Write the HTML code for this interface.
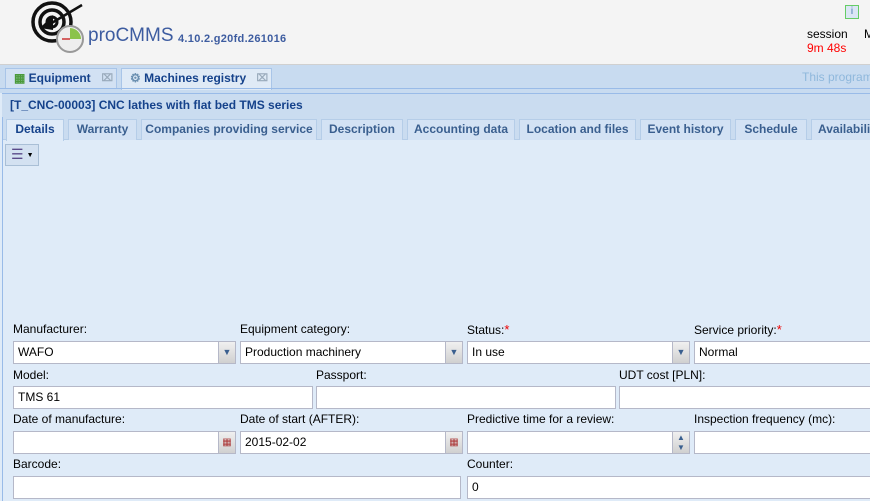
<!DOCTYPE html>
<html><head><style>
*{box-sizing:border-box;margin:0;padding:0}
body{width:870px;height:501px;overflow:hidden;background:#dfebf8;font-family:"Liberation Sans",sans-serif;font-size:12px;color:#000;position:relative}
.a{position:absolute;white-space:nowrap}
.hdr{left:0;top:0;width:870px;height:65px;background:#f4f4f4;border-bottom:1px solid #d0d0d0}
.strip{left:0;top:65px;width:870px;height:28px;background:#c8dbf0}
.otab{top:68px;height:21px;border:1px solid #a9c5e8;border-bottom:none;background:#d2e1f3;font-weight:bold;color:#15428b;font-size:12px;line-height:19px;padding-left:8px}
.ttl{left:2px;top:93px;width:868px;height:24px;background:#cadcf0;border-top:1px solid #99bbe8;font-weight:bold;color:#15428b;line-height:22px;padding-left:8px;font-size:12px}
.itab{top:119px;height:21px;border:1px solid #b5cde8;border-bottom:none;background:#d3e2f4;font-weight:bold;color:#3a5f8f;line-height:19px;text-align:center;font-size:12px}
.lbl{font-size:12px;color:#000}
.inp{height:23px;background:#fff;border:1px solid #b5b8c8;padding-left:4px;line-height:21px;font-size:12px}
.btn{height:23px;width:17px;background:linear-gradient(#f0f0f0,#d0d0d0);border:1px solid #b5b8c8;border-left:none}
.star{color:#e00;font-size:13px}
</style></head><body>
<div class="a hdr"></div>
<svg class="a" style="left:28px;top:0px" width="60" height="56" viewBox="0 0 60 56">
<circle cx="24" cy="22" r="19" fill="none" stroke="#111" stroke-width="3.5"/>
<circle cx="24" cy="22" r="12" fill="none" stroke="#111" stroke-width="3.5"/>
<circle cx="24" cy="22" r="5" fill="none" stroke="#111" stroke-width="3"/>
<line x1="22" y1="24" x2="54" y2="5" stroke="#111" stroke-width="2.5"/>
<polygon points="12,28 25,15 25,30" fill="#111"/>
<circle cx="42" cy="39" r="13" fill="#eee" stroke="#999" stroke-width="2"/>
<path d="M42 39 L42 28 A11 11 0 0 1 53 39 Z" fill="#8bc34a"/>
<line x1="42" y1="39" x2="34" y2="39" stroke="#c33" stroke-width="1.5"/>
</svg>
<div class="a" style="left:88px;top:25px;font-size:19px;color:#3d5ca0">proCMMS</div>
<div class="a" style="left:178px;top:33px;font-size:11px;color:#3d5ca0;font-weight:bold;letter-spacing:.3px">4.10.2.g20fd.261016</div>
<div class="a" style="left:845px;top:5px;width:14px;height:14px;border:1px solid #6c6;background:#dbe6f5;color:#4a7ab0;font-size:10px;text-align:center;line-height:12px">i</div>
<div class="a" style="left:807px;top:27px;font-size:12px">session</div>
<div class="a" style="left:864px;top:27px;font-size:12px">M</div>
<div class="a" style="left:807px;top:41px;font-size:12px;color:#f00">9m 48s</div>
<div class="a strip"></div>
<div class="a otab" style="left:5px;width:112px"><span style="color:#4a9a3a">&#9638;</span> Equipment<span style="position:absolute;right:3px;top:0;color:#9ab;font-size:10px">&#8999;</span></div>
<div class="a otab" style="left:121px;width:151px;background:#dfeaf6;height:22px"><span style="color:#6a8fb0">&#9881;</span> Machines registry<span style="position:absolute;right:3px;top:0;color:#9ab;font-size:10px">&#8999;</span></div>
<div class="a" style="left:802px;top:70px;color:#8fb8dc;font-size:12px">This program</div>
<div class="a" style="left:0;top:88px;width:870px;height:1px;background:#99bbe8"></div>
<div class="a ttl">[T_CNC-00003] CNC lathes with flat bed TMS series</div>
<div class="a" style="left:2px;top:117px;width:1px;height:384px;background:#99bbe8"></div>
<div class="a" style="left:3px;top:117px;width:867px;height:23px;background:#cadcf0;border-bottom:1px solid #b5cde8"></div>
<div class="a itab" style="left:6px;width:58px;background:#dfebf8;height:22px;color:#15428b">Details</div>
<div class="a itab" style="left:68px;width:69px">Warranty</div>
<div class="a itab" style="left:141px;width:176px">Companies providing service</div>
<div class="a itab" style="left:321px;width:82px">Description</div>
<div class="a itab" style="left:407px;width:108px">Accounting data</div>
<div class="a itab" style="left:519px;width:117px">Location and files</div>
<div class="a itab" style="left:640px;width:91px">Event history</div>
<div class="a itab" style="left:735px;width:72px">Schedule</div>
<div class="a itab" style="left:811px;width:70px;text-align:left;padding-left:6px">Availability</div>
<div class="a" style="left:5px;top:144px;width:34px;height:22px;border:1px solid #a9bfd6;background:#d3e1f1;color:#5a4a8a;font-size:14px;line-height:19px;padding-left:5px">&#9776;<span style="font-size:7px;color:#000;margin-left:3px;vertical-align:middle">&#9660;</span></div>

<div class="a lbl" style="left:13px;top:322px">Manufacturer:</div>
<div class="a lbl" style="left:240px;top:322px">Equipment category:</div>
<div class="a lbl" style="left:467px;top:322px">Status:<span class="star">*</span></div>
<div class="a lbl" style="left:694px;top:322px">Service priority:<span class="star">*</span></div>
<div class="a inp" style="left:13px;top:341px;width:206px">WAFO</div><div class="a btn" style="left:219px;top:341px;color:#3a5f8f;font-size:9px;text-align:center;line-height:21px">&#9660;</div>
<div class="a inp" style="left:240px;top:341px;width:206px">Production machinery</div><div class="a btn" style="left:446px;top:341px;color:#3a5f8f;font-size:9px;text-align:center;line-height:21px">&#9660;</div>
<div class="a inp" style="left:467px;top:341px;width:206px">In use</div><div class="a btn" style="left:673px;top:341px;color:#3a5f8f;font-size:9px;text-align:center;line-height:21px">&#9660;</div>
<div class="a inp" style="left:694px;top:341px;width:190px">Normal</div>

<div class="a lbl" style="left:13px;top:368px">Model:</div>
<div class="a lbl" style="left:316px;top:368px">Passport:</div>
<div class="a lbl" style="left:619px;top:368px">UDT cost [PLN]:</div>
<div class="a inp" style="left:13px;top:386px;width:300px">TMS 61</div>
<div class="a inp" style="left:316px;top:386px;width:300px"></div>
<div class="a inp" style="left:619px;top:386px;width:270px"></div>

<div class="a lbl" style="left:13px;top:412px">Date of manufacture:</div>
<div class="a lbl" style="left:240px;top:412px">Date of start (AFTER):</div>
<div class="a lbl" style="left:467px;top:412px">Predictive time for a review:</div>
<div class="a lbl" style="left:694px;top:412px">Inspection frequency (mc):</div>
<div class="a inp" style="left:13px;top:431px;width:206px"></div><div class="a btn" style="left:219px;top:431px;color:#a33;font-size:10px;text-align:center;line-height:21px">&#9638;</div>
<div class="a inp" style="left:240px;top:431px;width:206px">2015-02-02</div><div class="a btn" style="left:446px;top:431px;color:#a33;font-size:10px;text-align:center;line-height:21px">&#9638;</div>
<div class="a inp" style="left:467px;top:431px;width:206px"></div><div class="a btn" style="left:673px;top:431px;color:#3a5f8f;font-size:8px;text-align:center;line-height:10px;padding-top:1px">&#9650;<br>&#9660;</div>
<div class="a inp" style="left:694px;top:431px;width:190px"></div>

<div class="a lbl" style="left:13px;top:457px">Barcode:</div>
<div class="a lbl" style="left:467px;top:457px">Counter:</div>
<div class="a inp" style="left:13px;top:476px;width:448px"></div>
<div class="a inp" style="left:467px;top:476px;width:420px">0</div>
</body></html>
